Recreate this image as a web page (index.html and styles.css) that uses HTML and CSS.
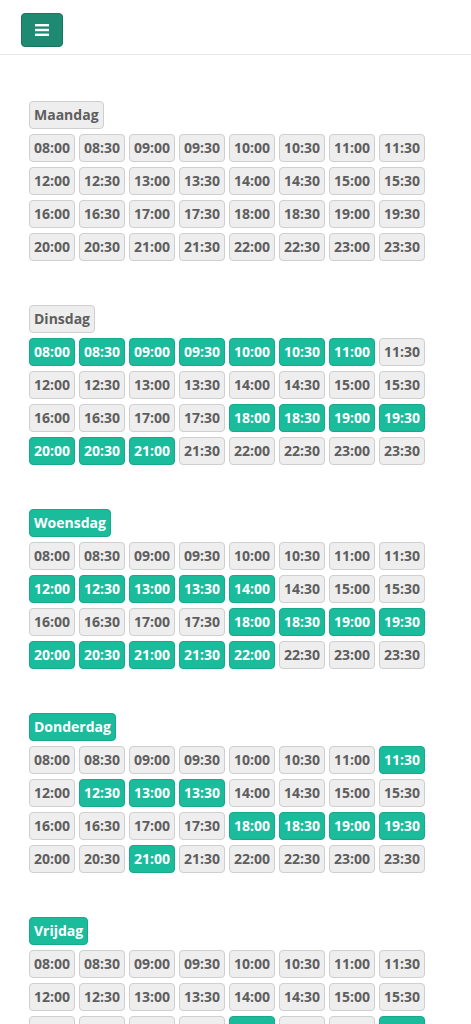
FILE: index.html
```html
<!DOCTYPE html>
<html lang="nl">
<head>
<meta charset="utf-8">
<title>Beschikbaarheid</title>
<link rel="stylesheet" href="styles.css">
</head>
<body>
<header class="topbar">
  <button class="menu-btn" aria-label="Menu">
    <svg width="14" height="12" viewBox="0 0 14 12"><rect x="0" y="0" width="14" height="2.4" fill="#fff"/><rect x="0" y="4.8" width="14" height="2.4" fill="#fff"/><rect x="0" y="9.6" width="14" height="2.4" fill="#fff"/></svg>
  </button>
</header>
<main class="content" id="days"></main>
<script src="app.js"></script>
</body>
</html>
```
FILE: styles.css
```css
* { box-sizing: border-box; }
html, body { margin: 0; padding: 0; background: #fff; }
body { font-family: "Open Sans", "Liberation Sans", sans-serif; }
.topbar {
  height: 55px;
  border-bottom: 1px solid #e6e9e8;
  padding: 13px 0 0 21px;
}
.menu-btn {
  width: 42px;
  height: 34px;
  background: #1e8a71;
  border: 1px solid #187560;
  border-radius: 4px;
  display: flex;
  align-items: center;
  justify-content: center;
  padding: 0;
}
.content { padding: 46px 0 0 29px; }
.day { margin-bottom: 44px; }
.chip {
  display: inline-block;
  font-size: 14px;
  font-weight: 700;
  line-height: 20px;
  padding: 3px 4px;
  border: 1px solid #cfcfcf;
  border-radius: 4px;
  background: #eeeeee;
  color: #5e5e5e;
  text-align: center;
  white-space: nowrap;
}
.chip.on {
  background: #1abc9c;
  border-color: #17a98b;
  color: #ffffff;
}
.day-label { margin-bottom: 5px; }
.slots {
  display: flex;
  flex-wrap: wrap;
  column-gap: 4px;
  row-gap: 5px;
  width: 400px;
}
.slot { width: 46px; }
```
FILE: app.js
```js
var days = [
  ["Maandag", false, []],
  ["Dinsdag", false, ["08:00","08:30","09:00","09:30","10:00","10:30","11:00","18:00","18:30","19:00","19:30","20:00","20:30","21:00"]],
  ["Woensdag", true, ["12:00","12:30","13:00","13:30","14:00","18:00","18:30","19:00","19:30","20:00","20:30","21:00","21:30","22:00"]],
  ["Donderdag", true, ["11:30","12:30","13:00","13:30","18:00","18:30","19:00","19:30","21:00"]],
  ["Vrijdag", true, ["18:00","19:30"]]
];
var root = document.getElementById("days");
days.forEach(function (d) {
  var sec = document.createElement("section");
  sec.className = "day";
  var lab = document.createElement("div");
  lab.className = "chip day-label" + (d[1] ? " on" : "");
  lab.textContent = d[0];
  sec.appendChild(lab);
  var wrap = document.createElement("div");
  wrap.className = "slots";
  for (var h = 8; h < 24; h++) {
    ["00", "30"].forEach(function (m) {
      var t = (h < 10 ? "0" : "") + h + ":" + m;
      var b = document.createElement("span");
      b.className = "chip slot" + (d[2].indexOf(t) >= 0 ? " on" : "");
      b.textContent = t;
      wrap.appendChild(b);
    });
  }
  sec.appendChild(wrap);
  root.appendChild(sec);
});
```
